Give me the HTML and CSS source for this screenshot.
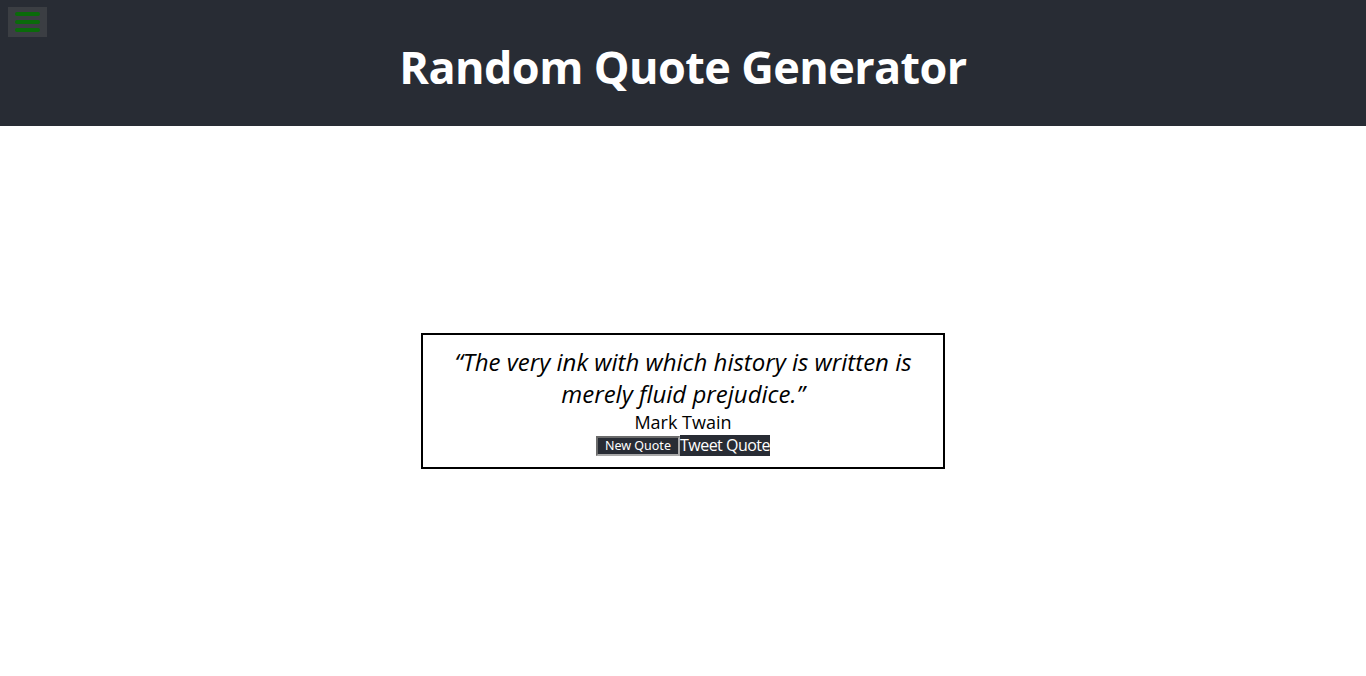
FILE: index.html
```html
<!DOCTYPE html>
<html>
<head>
<meta charset="utf-8">
<link rel="stylesheet" href="styles.css">
</head>
<body>
<div class="app">
  <header class="header">
    <button class="menu" aria-label="menu">
      <span class="bar"></span><span class="bar"></span><span class="bar"></span>
    </button>
    <h1 class="title">Random Quote Generator</h1>
  </header>
  <main class="main">
    <div class="quote-box">
      <p class="quote">“The very ink with which history is written is merely fluid prejudice.”</p>
      <p class="author">Mark Twain</p>
      <div class="actions">
        <button class="new-quote">New Quote</button><a class="tweet">Tweet Quote</a>
      </div>
    </div>
  </main>
</div>
</body>
</html>
```
FILE: styles.css
```css
html, body {
  margin: 0;
  padding: 0;
  height: 100%;
  background: #ffffff;
}
.app {
  display: flex;
  flex-direction: column;
  height: 100%;
  font-family: "Open Sans", "Noto Sans", sans-serif;
}
.header {
  position: relative;
  background: #282c34;
  height: 126px;
  display: flex;
  align-items: center;
  justify-content: center;
  flex-shrink: 0;
}
.menu {
  position: absolute;
  left: 8px;
  top: 7px;
  width: 39px;
  height: 30px;
  background: #3b3e43;
  border: none;
  padding: 0;
  display: flex;
  flex-direction: column;
  align-items: center;
  justify-content: center;
  gap: 4px;
}
.bar {
  display: block;
  width: 25px;
  height: 4px;
  border-radius: 2px;
  background: #0a6b0a;
}
.title {
  margin: 0;
  color: #ffffff;
  font-size: 45px;
  font-weight: 700;
  letter-spacing: -0.6px;
  padding-top: 6px;
}
.main {
  flex: 1;
  display: flex;
  align-items: center;
  justify-content: center;
}
.quote-box {
  width: 500px;
  padding: 11px 10px;
  border: 2px solid #000000;
  text-align: center;
  color: #000000;
}
.quote {
  margin: 0;
  font-style: italic;
  font-size: 24px;
  line-height: 32px;
}
.author {
  margin: 0;
  font-size: 18px;
  line-height: 24px;
}
.actions {
  display: flex;
  justify-content: center;
  align-items: center;
  height: 22px;
}
.new-quote {
  font-family: "Noto Sans", sans-serif;
  font-size: 12.5px;
  background: #282c34;
  color: #ffffff;
  border-style: solid;
  border-width: 2px;
  border-color: #6b6b6b #a8a8a8 #a8a8a8 #6b6b6b;
  padding: 1px 7px;
  height: 20px;
  line-height: 14px;
  margin-top: 2px;
}
.tweet {
  background: #282c34;
  color: #ffffff;
  font-size: 16px;
  line-height: 21px;
  height: 21px;
  padding: 0;
  letter-spacing: -0.5px;
}
```
